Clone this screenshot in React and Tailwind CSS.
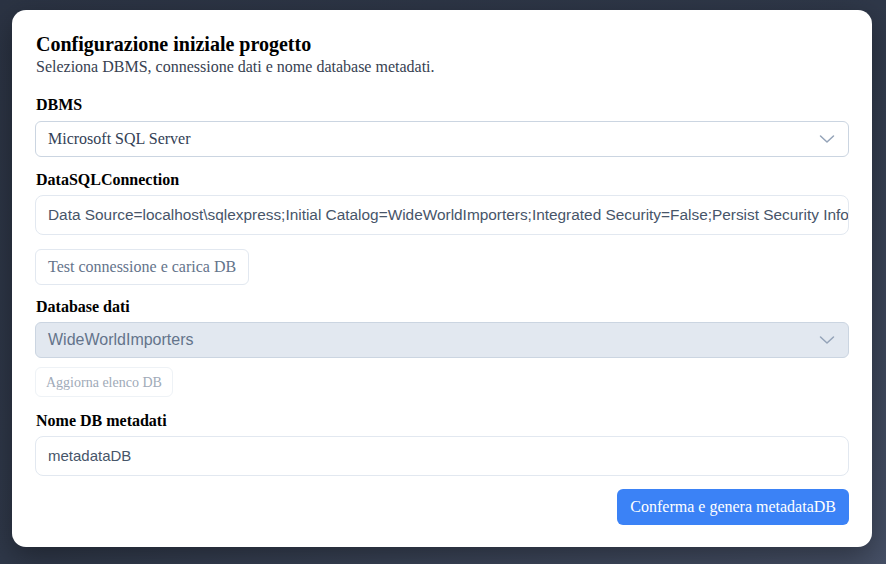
const serif = { fontFamily: '"Liberation Serif", "Times New Roman", serif' };

const Label = ({ className = '', children }) => (
  <label className={`block text-[16px] font-bold leading-[18px] text-black ${className}`}>{children}</label>
);

// select caret, drawn at its real size
const Caret = () => (
  <svg width="16" height="10" viewBox="0 0 16 10" fill="none" className="text-[#94a3b8]">
    <path d="M1.5 2 8 8l6.5-6" stroke="currentColor" strokeWidth="1.5" strokeLinecap="round" strokeLinejoin="round" />
  </svg>
);

export default function App() {
  return (
    <div className="h-[564px] w-full overflow-hidden bg-gradient-to-br from-[#2b3343] via-[#2f3849] to-[#465066] pl-[12px] pt-[10px] font-['Liberation_Serif',serif]">
      <div className="w-[860px] h-[537px] rounded-[14px] bg-white pl-[23px] pr-[23px] pt-6 shadow-[0_10px_30px_rgba(0,0,0,0.35)]">
        <h1 className="pl-px text-[20px] font-bold leading-[20px] text-black">Configurazione iniziale progetto</h1>
        <p className="mt-[3px] pl-px text-[16px] leading-[20px] text-[#374151]">
          Seleziona DBMS, connessione dati e nome database metadati.
        </p>

        {/* DBMS */}
        <Label className="mt-[19px] pl-px">DBMS</Label>
        <div className="mt-[7px] flex h-[36px] items-center justify-between rounded-md border border-[#cbd5e1] bg-white pl-3 pr-[13px]">
          <span className="text-[16px] text-[#334155]">Microsoft SQL Server</span>
          <Caret />
        </div>

        {/* connection string */}
        <Label className="mt-[14px] pl-px">DataSQLConnection</Label>
        <div className="mt-[6px] flex h-[40px] items-center overflow-hidden whitespace-nowrap rounded-lg border border-[#e2e8f0] px-3">
          <span className="font-['Liberation_Sans',Arial,sans-serif] text-[15.4px] text-[#475569]">
            Data Source=localhost\sqlexpress;Initial Catalog=WideWorldImporters;Integrated Security=False;Persist Security Info=False;User ID=sa
          </span>
        </div>
        <button
          className="mt-[14px] block h-[36px] rounded-md border border-[#e2e8f0] bg-white px-[12px] text-[16px] text-[#64748b]"
          style={serif}
        >
          Test connessione e carica DB
        </button>

        {/* database dati */}
        <Label className="mt-[13px] pl-px">Database dati</Label>
        <div className="mt-[6px] flex h-[36px] items-center justify-between rounded-md border border-[#cbd5e1] bg-[#e2e8f0] pl-3 pr-[13px]">
          <span className="font-['Liberation_Sans',Arial,sans-serif] text-[16px] text-[#64748b]">WideWorldImporters</span>
          <Caret />
        </div>
        <button
          className="mt-[9px] block h-[30px] rounded-md border border-[#eef2f6] bg-white px-[10px] text-[14px] text-[#a0aab8]"
          style={serif}
        >
          Aggiorna elenco DB
        </button>

        {/* nome db metadati */}
        <Label className="mt-[15px] pl-px">Nome DB metadati</Label>
        <div className="mt-[6px] flex h-[40px] items-center rounded-lg border border-[#e2e8f0] px-3">
          <span className="font-['Liberation_Sans',Arial,sans-serif] text-[15px] text-[#475569]">metadataDB</span>
        </div>

        <div className="mt-[13px] flex justify-end">
          <button className="h-[36px] rounded-md bg-[#3b82f6] px-[13px] text-[16px] text-white" style={serif}>
            Conferma e genera metadataDB
          </button>
        </div>
      </div>
    </div>
  );
}
